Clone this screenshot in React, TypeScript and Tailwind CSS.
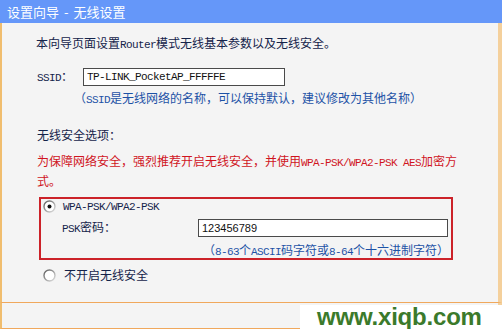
import React from 'react';

// ASCII runs look like SimSun's half-width glyphs: 6px per character
const A: React.FC<{ children: React.ReactNode }> = ({ children }) => (
  <span className="font-['Liberation_Mono',monospace] text-[11px] tracking-[-0.6px]">{children}</span>
);

const Radio: React.FC<{ checked?: boolean; id: string }> = ({ checked = false, id }) => (
  <svg width="13" height="13" viewBox="0 0 13 13" className="shrink-0">
    <defs>
      <linearGradient id={id} x1="0" y1="0" x2="1" y2="1">
        <stop offset="0" stopColor="#5a5a5a" />
        <stop offset="1" stopColor="#e2e2e2" />
      </linearGradient>
    </defs>
    <circle cx="6.5" cy="6.5" r="5.5" fill="#ffffff" stroke={`url(#${id})`} strokeWidth="1.4" />
    {checked && <circle cx="6.5" cy="6.5" r="2" fill="#111111" />}
  </svg>
);

export default function App() {
  return (
    <div className="relative w-[502px] h-[329px] overflow-hidden bg-[#f4f4f4] font-['Noto_Sans_CJK_SC',sans-serif] text-[12px] text-[#14234a]">
      {/* 标题栏 */}
      <div className="h-[23px] bg-[#6597f9] pl-[7px] leading-[23px] text-[13px] text-white">
        设置向导<span className="mx-[5px]">-</span>无线设置
      </div>

      {/* 内容区 */}
      <div className="h-[279px] border-l-2 border-r-4 border-l-[#f0bd6e] border-r-[#f4d09c] pl-[35px] flex flex-col">
        <div className="mt-[12px] leading-[16px] -ml-px">
          本向导页面设置<A>Router</A>模式无线基本参数以及无线安全。
        </div>

        <div className="mt-[15px] flex items-center h-[18px]">
          <span className="w-[46px] leading-[16px]">
            <A>SSID</A>：
          </span>
          <input
            readOnly
            value="TP-LINK_PocketAP_FFFFFE"
            className="w-[202px] h-[18px] border border-[#4a4a4a] bg-white px-[3px] font-['Liberation_Mono',monospace] text-[11px] tracking-[-0.6px] text-[#111] outline-none"
          />
        </div>

        <div className="mt-[4px] pl-[37px] leading-[16px] text-[#1d52a6]">
          （<A>SSID</A>是无线网络的名称，可以保持默认，建议修改为其他名称）
        </div>

        <div className="mt-[19px] leading-[16px]">无线安全选项：</div>

        <div className="mt-[9px] leading-[18px] text-[#d0141e]">
          为保障网络安全，强烈推荐开启无线安全，并使用<A>WPA-PSK/WPA2-PSK AES</A>加密方
          <br />
          式。
        </div>

        <div className="mt-[7px] ml-[2px] w-[414px] h-[63px] border-2 border-[#cc2229] flex flex-col">
          <div className="flex items-center h-[14px] pl-[2px]">
            <Radio checked id="r1" />
            <span className="ml-[7px]">
              <A>WPA-PSK/WPA2-PSK</A>
            </span>
          </div>
          <div className="mt-[6px] flex items-center h-[18px] pl-[21px]">
            <span className="w-[136px] leading-[16px]">
              <A>PSK</A>密码：
            </span>
            <input
              readOnly
              value="123456789"
              className="w-[250px] h-[18px] border border-[#4a4a4a] bg-white px-[3px] font-['Liberation_Sans',sans-serif] text-[11px] text-[#111] outline-none"
            />
          </div>
          <div className="mt-[5px] pl-[162px] leading-[16px] text-[#1d52a6]">
            （<A>8-63</A>个<A>ASCII</A>码字符或<A>8-64</A>个十六进制字符）
          </div>
        </div>

        <div className="mt-[8px] flex items-center h-[14px] pl-[6px]">
          <Radio id="r2" />
          <span className="ml-[8px]">不开启无线安全</span>
        </div>
      </div>

      {/* 底部 */}
      <div className="h-[27px] border-t border-b border-l-2 border-r-4 border-t-[#f0a85c] border-b-[#f0a85c] border-l-[#f0bd6e] border-r-[#f4d09c]" />

      {/* 水印 */}
      <div className="absolute right-0 bottom-0 w-[202px] h-[24px] bg-white flex items-center pl-[17px]">
        <span className="font-['Liberation_Sans',sans-serif] font-bold text-[24px] leading-none text-[#3b7a2b] tracking-[-0.2px]">
          www.xiqb.com
        </span>
      </div>
    </div>
  );
}
